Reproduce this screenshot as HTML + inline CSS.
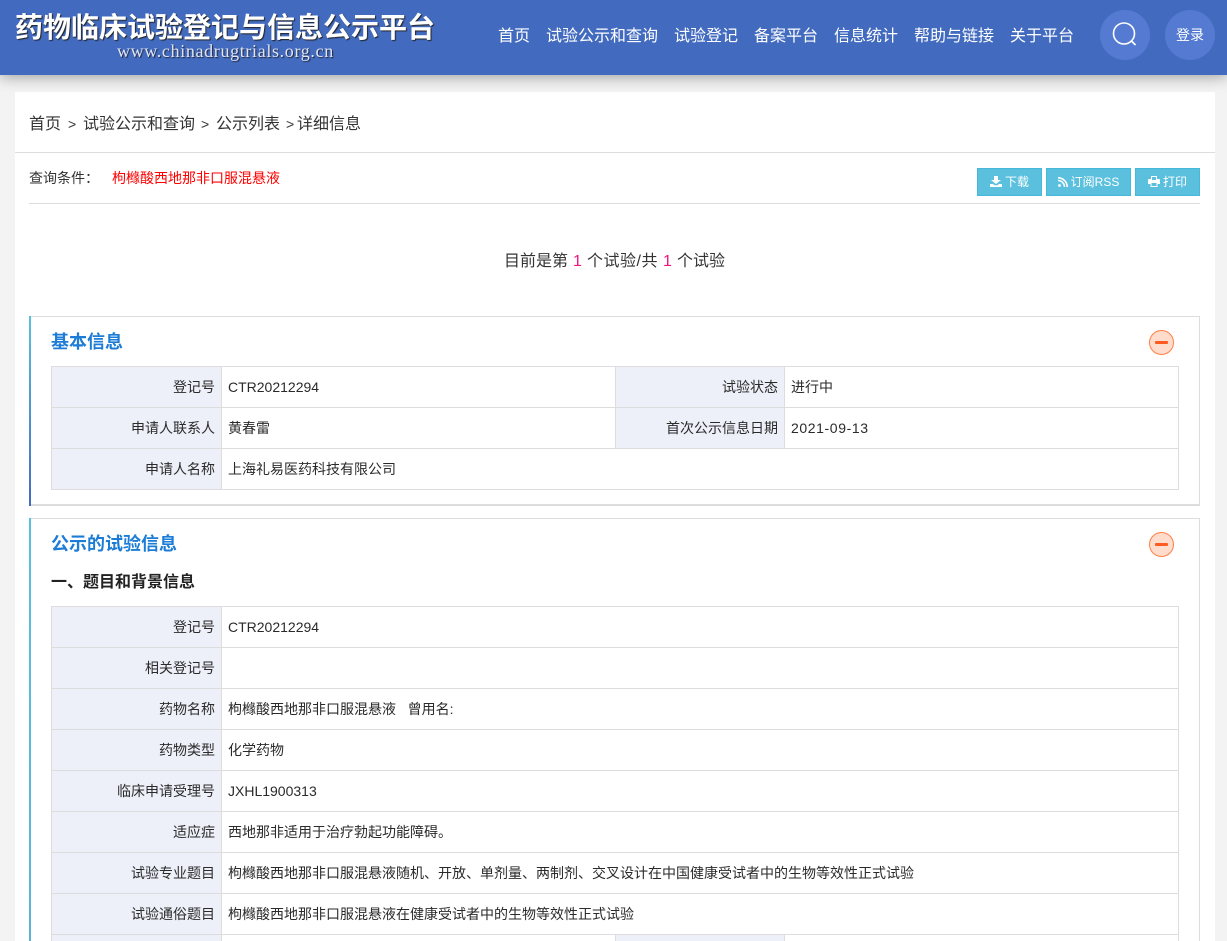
<!DOCTYPE html>
<html lang="zh-CN">
<head>
<meta charset="utf-8">
<title>药物临床试验登记与信息公示平台</title>
<style>
html,body{margin:0;padding:0;width:1227px;height:941px;overflow:hidden;}
#w{position:relative;width:1227px;height:941px;overflow:hidden;background:#f3f3f3;font-family:"Liberation Sans","Noto Sans CJK SC",sans-serif;color:#222;font-size:14px;}
.a{position:absolute;white-space:nowrap;}
.hdr{position:absolute;left:0;top:0;width:1227px;height:75px;background:#426bbf;box-shadow:0 2px 14px rgba(0,0,0,.35);z-index:3;}
.nav{position:absolute;top:26px;font-size:16px;line-height:22px;color:#fff;white-space:nowrap;}
.circ{position:absolute;top:10px;width:50px;height:50px;border-radius:50%;background:#557ad2;}
.main{position:absolute;left:15px;top:92px;width:1200px;height:849px;background:#fff;}
.btn{position:absolute;top:168px;height:28px;box-sizing:border-box;background:#5bc0de;border:1px solid #46b8da;color:#fff;font-size:12px;line-height:26px;text-align:center;white-space:nowrap;}
.btn svg{vertical-align:-1px;margin-right:3px;}
.panel{position:absolute;left:29px;width:1171px;box-sizing:border-box;border:1px solid #ddd;border-left:none;}
.bar{position:absolute;left:29px;width:2px;}
.h{position:absolute;left:51px;font-size:18px;font-weight:bold;color:#1c7cd6;line-height:26px;white-space:nowrap;}
table{position:absolute;left:51px;width:1128px;border-collapse:collapse;table-layout:fixed;font-size:14px;color:#2a2a2a;}
td{border:1px solid #ddd;height:41px;padding:0 6px;box-sizing:border-box;line-height:20px;white-space:nowrap;overflow:hidden;}
td.l{background:#edf0f8;text-align:right;}
.tog{position:absolute;left:1149px;width:23px;height:23px;border:1px solid #ff7f47;border-radius:50%;background:#ffdccb;}
.tog i{position:absolute;left:5px;top:10px;width:13px;height:3px;background:#ff5a1f;border-radius:1px;}
</style>
</head>
<body>
<div id="w">
<div class="hdr">
  <div class="a" style="left:15px;top:10px;font-size:28px;line-height:36px;font-weight:bold;color:#fff;text-shadow:1px 1px 1px #222;">药物临床试验登记与信息公示平台</div>
  <div class="a" style="left:117px;top:41px;font-family:'Liberation Serif',serif;font-size:18px;letter-spacing:.65px;line-height:20px;color:#dfe6f5;text-shadow:1px 1px 1px #223;">www.chinadrugtrials.org.cn</div>
  <div class="nav" style="left:498px;">首页</div>
  <div class="nav" style="left:546px;">试验公示和查询</div>
  <div class="nav" style="left:674px;">试验登记</div>
  <div class="nav" style="left:754px;">备案平台</div>
  <div class="nav" style="left:834px;">信息统计</div>
  <div class="nav" style="left:914px;">帮助与链接</div>
  <div class="nav" style="left:1010px;">关于平台</div>
  <div class="circ" style="left:1100px;">
    <svg width="50" height="50" viewBox="0 0 50 50" style="position:absolute;left:0;top:0;"><circle cx="24" cy="23.500" r="10.500" fill="none" stroke="#fff" stroke-width="1.600"/><path d="M31.500 31L35 34.500" fill="none" stroke="#fff" stroke-width="1.800" stroke-linecap="round"/></svg>
  </div>
  <div class="circ" style="left:1165px;"><div style="position:absolute;left:0;width:50px;top:15px;text-align:center;color:#fff;font-size:14px;line-height:20px;">登录</div></div>
</div>

<div class="main"></div>
<div class="a" style="left:15px;top:152px;width:1200px;height:1px;background:#ddd;"></div>
<div class="a" style="left:29px;top:115px;font-size:16px;line-height:20px;color:#333;">首页</div>
<div class="a" style="left:68px;top:114px;font-size:14px;line-height:20px;color:#333;">&gt;</div>
<div class="a" style="left:83px;top:115px;font-size:16px;line-height:20px;color:#333;">试验公示和查询</div>
<div class="a" style="left:201px;top:114px;font-size:14px;line-height:20px;color:#333;">&gt;</div>
<div class="a" style="left:216px;top:115px;font-size:16px;line-height:20px;color:#333;">公示列表</div>
<div class="a" style="left:286px;top:114px;font-size:14px;line-height:20px;color:#333;">&gt;</div>
<div class="a" style="left:297px;top:115px;font-size:16px;line-height:20px;color:#333;">详细信息</div>
<div class="a" style="left:29px;top:168px;font-size:14px;line-height:20px;color:#333;">查询条件：</div>
<div class="a" style="left:112px;top:168px;font-size:14px;line-height:20px;color:#ff0000;">枸橼酸西地那非口服混悬液</div>
<div class="btn" style="left:977px;width:65px;"><svg width="12" height="11" viewBox="0 0 12 11"><path d="M4 0h4v4h3L6 8 1 4h3zM0 8h3l1.500 1.300h3L9 8h3v3H0z" fill="#fff"/></svg>下载</div>
<div class="btn" style="left:1046px;width:85px;"><svg width="10" height="10" viewBox="0 0 10 10"><circle cx="1.500" cy="8.500" r="1.400" fill="#fff"/><path d="M0 3.500A6.500 6.500 0 0 1 6.500 10M0 .8A9.200 9.200 0 0 1 9.200 10" fill="none" stroke="#fff" stroke-width="1.600"/></svg>订阅RSS</div>
<div class="btn" style="left:1135px;width:65px;"><svg width="12" height="11" viewBox="0 0 12 11"><path d="M3 0h6v3h2a1 1 0 0 1 1 1v4H9.500v3h-7V8H0V4a1 1 0 0 1 1-1h2zM4 1v3h4V1zM3.500 7v3h5V7z" fill="#fff" fill-rule="evenodd"/></svg>打印</div>
<div class="a" style="left:29px;top:203px;width:1171px;height:1px;background:#ddd;"></div>

<div class="a" style="left:504px;top:251px;font-size:16px;line-height:22px;color:#333;">目前是第</div>
<div class="a" style="left:573px;top:251px;font-size:16px;line-height:22px;color:#f0157f;">1</div>
<div class="a" style="left:587px;top:251px;font-size:16px;line-height:22px;color:#333;letter-spacing:.5px;">个试验/共</div>
<div class="a" style="left:663px;top:251px;font-size:16px;line-height:22px;color:#f0157f;">1</div>
<div class="a" style="left:677px;top:251px;font-size:16px;line-height:22px;color:#333;">个试验</div>

<div class="panel" style="top:316px;height:190px;border-bottom-width:2px;"></div>
<div class="bar" style="top:316px;height:190px;background:linear-gradient(#5bc0de,#426bbf);"></div>
<div class="h" style="top:329px;">基本信息</div>
<div class="tog" style="top:330px;"><i></i></div>
<table style="top:366px;">
<colgroup><col style="width:170px"><col style="width:394px"><col style="width:169px"><col></colgroup>
<tr><td class="l">登记号</td><td>CTR20212294</td><td class="l">试验状态</td><td>进行中</td></tr>
<tr><td class="l">申请人联系人</td><td>黄春雷</td><td class="l">首次公示信息日期</td><td style="letter-spacing:.6px;">2021-09-13</td></tr>
<tr><td class="l">申请人名称</td><td colspan="3">上海礼易医药科技有限公司</td></tr>
</table>

<div class="panel" style="top:518px;height:430px;"></div>
<div class="bar" style="top:518px;height:430px;background:linear-gradient(#5bc0de,#5bb3d8);"></div>
<div class="h" style="top:531px;">公示的试验信息</div>
<div class="tog" style="top:532px;"><i></i></div>
<div class="a" style="left:51px;top:572px;font-size:16px;font-weight:bold;line-height:22px;color:#222;">一、题目和背景信息</div>
<table style="top:606px;">
<colgroup><col style="width:170px"><col style="width:394px"><col style="width:169px"><col></colgroup>
<tr><td class="l">登记号</td><td colspan="3">CTR20212294</td></tr>
<tr><td class="l">相关登记号</td><td colspan="3"></td></tr>
<tr><td class="l">药物名称</td><td colspan="3">枸橼酸西地那非口服混悬液&nbsp;&nbsp; 曾用名:</td></tr>
<tr><td class="l">药物类型</td><td colspan="3">化学药物</td></tr>
<tr><td class="l">临床申请受理号</td><td colspan="3">JXHL1900313</td></tr>
<tr><td class="l">适应症</td><td colspan="3">西地那非适用于治疗勃起功能障碍。</td></tr>
<tr><td class="l">试验专业题目</td><td colspan="3">枸橼酸西地那非口服混悬液随机、开放、单剂量、两制剂、交叉设计在中国健康受试者中的生物等效性正式试验</td></tr>
<tr><td class="l">试验通俗题目</td><td colspan="3">枸橼酸西地那非口服混悬液在健康受试者中的生物等效性正式试验</td></tr>
<tr><td class="l"></td><td></td><td class="l"></td><td></td></tr>
</table>
</div>
</body>
</html>
